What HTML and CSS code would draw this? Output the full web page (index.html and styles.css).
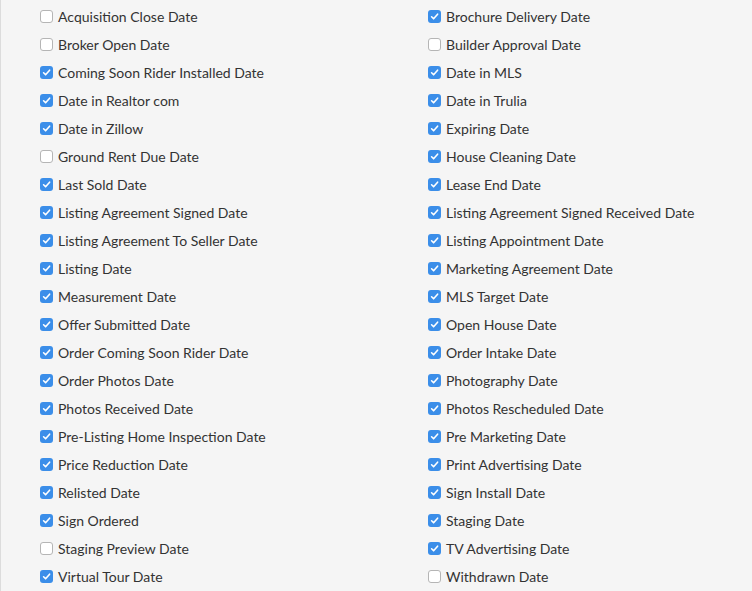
FILE: index.html
```html
<!DOCTYPE html>
<html>
<head>
<meta charset="utf-8">
<link rel="stylesheet" href="styles.css">
</head>
<body>
<div class="panel">
  <ul class="list" id="list"></ul>
</div>
<script src="app.js"></script>
</body>
</html>
```
FILE: app.js
```js
var items = [
["Acquisition Close Date",0],["Brochure Delivery Date",1],
["Broker Open Date",0],["Builder Approval Date",0],
["Coming Soon Rider Installed Date",1],["Date in MLS",1],
["Date in Realtor com",1],["Date in Trulia",1],
["Date in Zillow",1],["Expiring Date",1],
["Ground Rent Due Date",0],["House Cleaning Date",1],
["Last Sold Date",1],["Lease End Date",1],
["Listing Agreement Signed Date",1],["Listing Agreement Signed Received Date",1],
["Listing Agreement To Seller Date",1],["Listing Appointment Date",1],
["Listing Date",1],["Marketing Agreement Date",1],
["Measurement Date",1],["MLS Target Date",1],
["Offer Submitted Date",1],["Open House Date",1],
["Order Coming Soon Rider Date",1],["Order Intake Date",1],
["Order Photos Date",1],["Photography Date",1],
["Photos Received Date",1],["Photos Rescheduled Date",1],
["Pre-Listing Home Inspection Date",1],["Pre Marketing Date",1],
["Price Reduction Date",1],["Print Advertising Date",1],
["Relisted Date",1],["Sign Install Date",1],
["Sign Ordered",1],["Staging Date",1],
["Staging Preview Date",0],["TV Advertising Date",1],
["Virtual Tour Date",1],["Withdrawn Date",0]
];
var list = document.getElementById('list');
items.forEach(function (it) {
  var li = document.createElement('li');
  li.className = 'item';
  var box = document.createElement('span');
  box.className = 'box' + (it[1] ? ' checked' : '');
  if (it[1]) {
    box.innerHTML = '<svg viewBox="0 0 13 13" width="13" height="13"><path d="M3.6 6.8 L5.6 8.8 L9.6 4.2" fill="none" stroke="#fff" stroke-width="1.6" stroke-linecap="round" stroke-linejoin="round"/></svg>';
  }
  var label = document.createElement('span');
  label.className = 'label';
  label.textContent = it[0];
  li.appendChild(box);
  li.appendChild(label);
  list.appendChild(li);
});
```
FILE: styles.css
```css
html, body {
  margin: 0;
  padding: 0;
  background: #f5f5f5;
}
body {
  font-family: Lato, "Liberation Sans", sans-serif;
  color: #333;
  font-size: 14px;
  height: 591px;
  overflow: hidden;
}
.panel {
  border-left: 1px solid #dcdcdc;
  height: 591px;
  box-sizing: border-box;
  padding: 2px 0 0 39px;
}
.list {
  list-style: none;
  margin: 0;
  padding: 0;
  display: grid;
  grid-template-columns: 388px 1fr;
}
.item {
  display: flex;
  align-items: center;
  height: 28px;
}
.box {
  width: 13px;
  height: 13px;
  box-sizing: border-box;
  border: 1px solid #b5b5b5;
  border-radius: 3px;
  background: #fff;
  margin-right: 5px;
  flex: none;
  display: flex;
}
.box.checked {
  border: none;
  background: #3b8ee9;
}
.box svg { display: block; }
.label {
  white-space: nowrap;
}
```
